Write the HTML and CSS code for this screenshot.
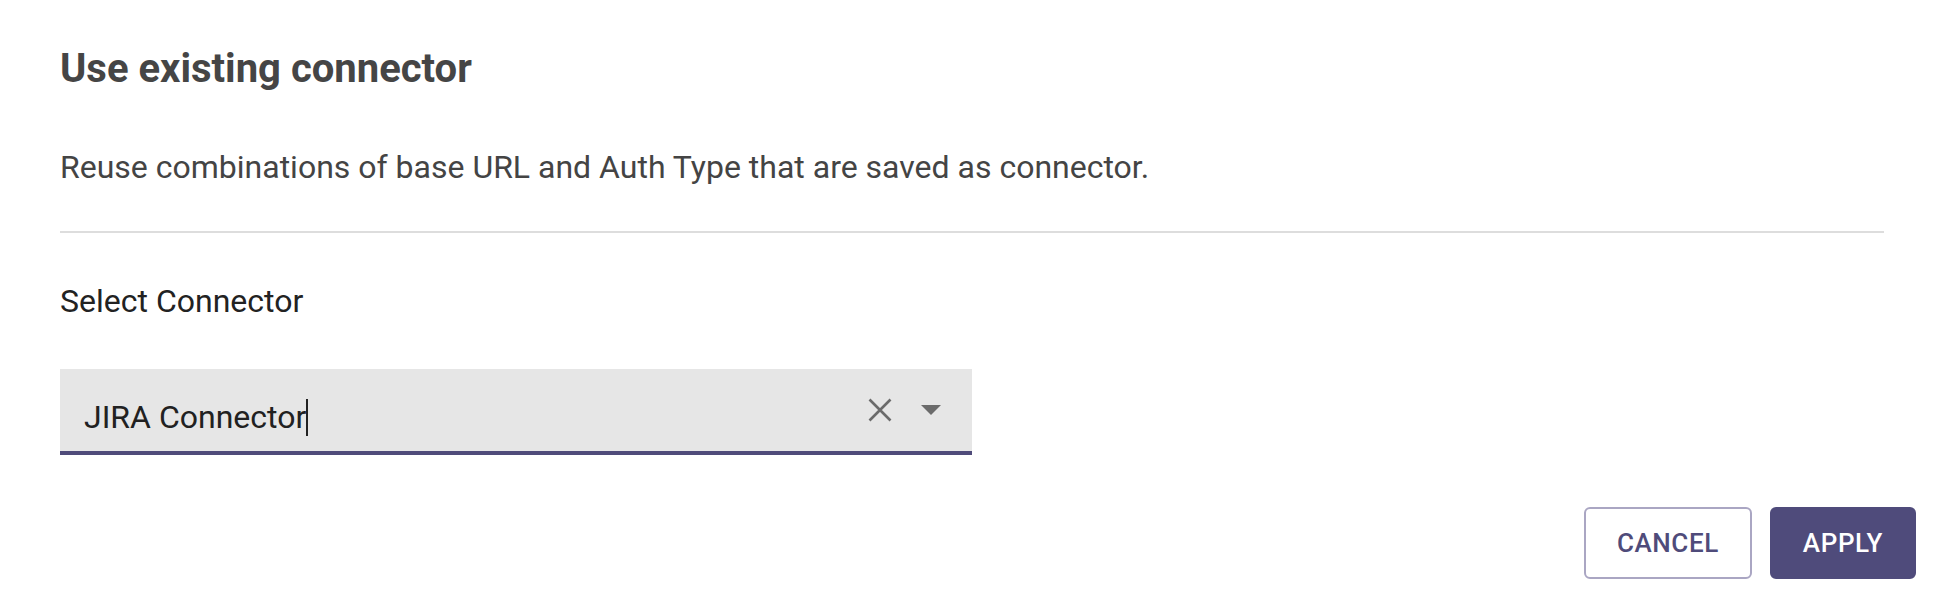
FILE: index.html
```html
<!DOCTYPE html>
<html lang="en">
<head>
<meta charset="utf-8">
<title>Use existing connector</title>
<link rel="stylesheet" href="styles.css">
</head>
<body>
<div class="dialog">
  <div class="content">
    <h2 class="title">Use existing connector</h2>
    <p class="desc">Reuse combinations of base URL and Auth Type that are saved as connector.</p>
    <hr class="divider">
    <div class="label">Select Connector</div>
    <div class="field">
      <div class="value"><span>JIRA Connector</span><span class="caret-line"></span></div>
      <div class="icons">
        <svg class="clear" width="24" height="24" viewBox="0 0 24 24" aria-hidden="true"><path d="M1.5 1.5 L22.5 22.5 M22.5 1.5 L1.5 22.5" stroke="#6b6b6b" stroke-width="2.6" fill="none"/></svg>
        <svg class="arrow" width="20" height="10" viewBox="0 0 20 10" aria-hidden="true"><path d="M0 0 H20 L10 10 Z" fill="#6b6b6b"/></svg>
      </div>
    </div>
  </div>
  <div class="actions">
    <button class="btn btn-outline">CANCEL</button>
    <button class="btn btn-primary">APPLY</button>
  </div>
</div>
</body>
</html>
```
FILE: styles.css
```css
* { box-sizing: border-box; }
html, body { margin: 0; padding: 0; background: #ffffff; }
body { font-family: Roboto, "Liberation Sans", Arial, sans-serif; width: 1942px; height: 606px; overflow: hidden; }
.dialog { display: flex; flex-direction: column; }
.content { padding: 45px 58px 0 60px; display: flex; flex-direction: column; }
.title { margin: 0; font-size: 40px; line-height: 48px; font-weight: 700; color: #454545; }
.desc { margin: 55px 0 0; font-size: 32px; line-height: 38px; font-weight: 400; color: #444444; }
.divider { margin: 45px 0 0; border: 0; height: 2px; background: #dddddd; }
.label { margin-top: 49px; font-size: 32px; line-height: 38px; color: #222222; }
.field { margin-top: 49px; width: 912px; height: 86px; background: #e6e6e6; border-bottom: 4px solid #4f4b7a; display: flex; align-items: center; justify-content: space-between; padding: 0 24px 0 24px; }
.value { display: flex; align-items: center; font-size: 32px; line-height: 38px; color: #212121; padding-top: 14px; }
.caret-line { display: inline-block; width: 2px; height: 37px; background: #222; margin-left: 0; }
.icons { display: flex; align-items: center; gap: 29px; padding-right: 7px; }
.clear, .arrow { display: block; }
.actions { display: flex; justify-content: flex-end; gap: 18px; padding: 52px 26px 0 0; }
.btn { height: 72px; padding: 0 31px; border-radius: 6px; font-family: Roboto, "Liberation Sans", Arial, sans-serif; font-size: 26px; font-weight: 500; letter-spacing: 0.6px; cursor: pointer; }
.btn-outline { background: #ffffff; color: #4f4b7a; border: 2px solid #aaa6c3; }
.btn-primary { background: #4f4b7b; color: #ffffff; border: 2px solid #4f4b7b; }
```
